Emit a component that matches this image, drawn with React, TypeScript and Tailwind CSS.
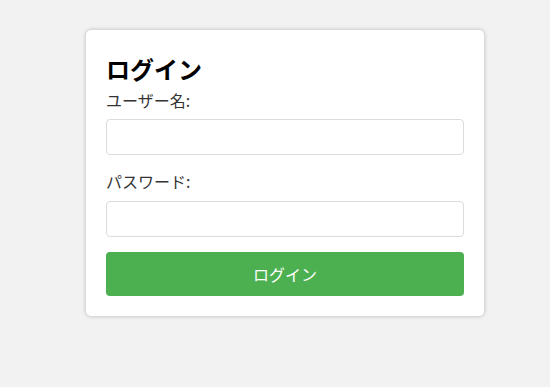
export default function App() {
  return (
    <div
      className="min-h-[387px] w-full bg-[#f2f2f2] pl-[86px] pt-[30px]"
      style={{ fontFamily: '"Noto Sans CJK JP", "Noto Sans", sans-serif' }}
    >
      <div className="flex w-[398px] flex-col rounded-[5px] bg-white px-[20px] pt-[20px] pb-[20px] shadow-[0_0_4px_rgba(0,0,0,0.25)]">
        <h2 className="text-[24px] font-bold leading-[38px] text-black">ログイン</h2>
        <label className="mt-[1px] block text-[16px] leading-[23px] text-[#333]">ユーザー名:</label>
        <input
          type="text"
          className="mt-[7px] h-[36px] w-full rounded-[4px] border border-[#dcdcdc] bg-white px-2 outline-none"
        />
        <label className="mt-[15px] block text-[16px] leading-[23px] text-[#333]">パスワード:</label>
        <input
          type="password"
          className="mt-[8px] h-[36px] w-full rounded-[4px] border border-[#dcdcdc] bg-white px-2 outline-none"
        />
        <button className="mt-[15px] h-[44px] w-full rounded-[4px] bg-[#4caf50] text-[16px] text-white">
          ログイン
        </button>
      </div>
    </div>
  );
}
